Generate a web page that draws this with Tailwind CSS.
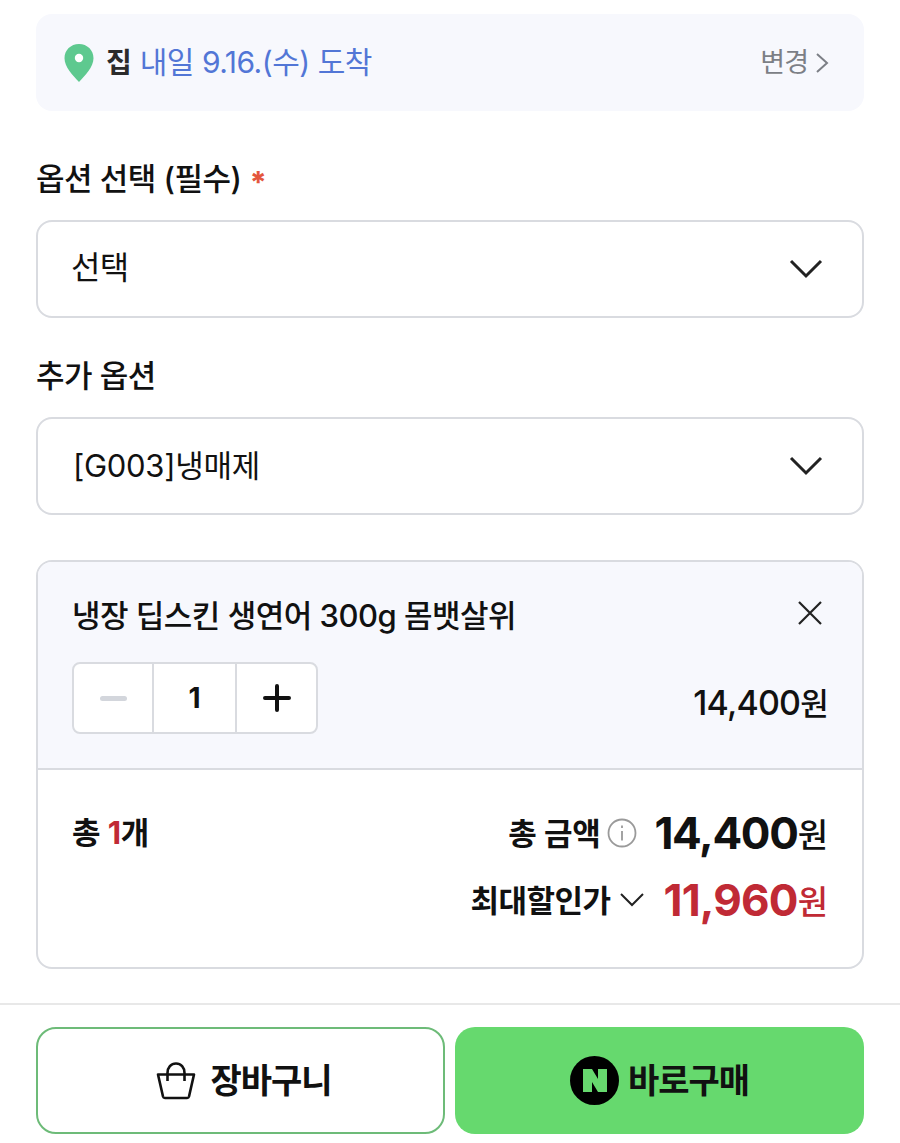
<!DOCTYPE html>
<html lang="ko">
<head>
  <meta charset="UTF-8" />
  <meta name="viewport" content="width=device-width, initial-scale=1.0" />
  <title>옵션 선택</title>
  <script src="https://cdn.jsdelivr.net/npm/@tailwindcss/browser@4"></script>
</head>
<body class="bg-white text-[#111] font-['Inter','Noto_Sans_CJK_KR',sans-serif] w-[900px] h-[1143px] overflow-hidden">

  <div class="px-9 pt-[14px]">
    <!-- delivery -->
    <div class="h-[97px] rounded-2xl bg-[#f7f8fd] flex items-center justify-between pl-[28px] pr-[35px]">
      <div class="flex items-center">
        <svg class="w-[30px] h-[38px]" viewBox="0 0 30 38">
          <path fill="#5ec98f" d="M15 0C6.700 0 0.500 6.200 0.500 14.200 0.500 23 9 31.500 15 38 21 31.500 29.500 23 29.500 14.200 29.500 6.200 23.300 0 15 0Z" />
          <circle cx="15" cy="14" r="4.200" fill="#fff" />
        </svg>
        <span class="ml-[12px] text-[28px] leading-none font-bold text-[#2b2b2b]">집</span>
        <span class="ml-[8px] text-[30px] leading-none -mt-[1px] text-[#5276d6] tracking-[-0.5px]">내일 9.16.(수) 도착</span>
      </div>
      <div class="flex items-center text-[#7c7f86]">
        <span class="text-[27px] leading-none tracking-[-1px]">변경</span>
        <svg class="w-[14px] h-[22px] ml-[7px]" viewBox="0 0 14 22" fill="none" stroke="#7c7f86" stroke-width="2"><path d="M2 2l10 9-10 9" /></svg>
      </div>
    </div>

    <!-- option -->
    <div class="mt-[47px] h-[40px] flex items-center text-[31px] leading-none font-medium tracking-[-0.5px]">
      옵션 선택 (필수)
      <span class="ml-[8px] mt-[8px] text-[#e4573d] font-extrabold text-[30px] leading-none">*</span>
    </div>
    <div class="mt-[22px] h-[98px] rounded-2xl border-2 border-[#d9dbe0] flex items-center justify-between pl-[33px] pr-[39px]">
      <span class="text-[32px] leading-none -mt-[2px] tracking-[-0.6px]">선택</span>
      <svg class="w-[34px] h-[20px]" viewBox="0 0 34 20" fill="none" stroke="#222" stroke-width="3"><path d="M2 2l15 15L32 2" /></svg>
    </div>

    <div class="mt-[37px] h-[40px] flex items-center text-[31px] leading-none font-medium tracking-[-0.5px]">추가 옵션</div>
    <div class="mt-[22px] h-[98px] rounded-2xl border-2 border-[#d9dbe0] flex items-center justify-between pl-[35px] pr-[39px]">
      <span class="text-[31px] leading-none -mt-[2px] tracking-[-0.3px]">[G003]냉매제</span>
      <svg class="w-[34px] h-[20px]" viewBox="0 0 34 20" fill="none" stroke="#222" stroke-width="3"><path d="M2 2l15 15L32 2" /></svg>
    </div>

    <!-- selected item -->
    <div class="mt-[45px] h-[409px] rounded-2xl border-2 border-[#d9dbe0] overflow-hidden">
      <div class="h-[208px] bg-[#f7f8fd] border-b-2 border-[#d9dbe0] pl-[34px] pr-[39px] pt-[38px]">
        <div class="flex items-start justify-between">
          <span class="text-[31px] leading-[32px] font-medium tracking-[-0.5px]">냉장 딥스킨 생연어 300g 몸뱃살위</span>
          <svg class="w-[26px] h-[26px]" viewBox="0 0 26 26" fill="none" stroke="#222" stroke-width="2.200"><path d="M2 2l22 22M24 2L2 24" /></svg>
        </div>
        <div class="mt-[30px] flex items-center justify-between -mr-[5px]">
          <div class="w-[246px] h-[72px] rounded-lg border-2 border-[#d9dbe0] bg-white flex">
            <div class="w-[80px] border-r-2 border-[#d9dbe0] flex items-center justify-center">
              <div class="w-[27px] h-[5px] rounded-full bg-[#d3d6dc]"></div>
            </div>
            <div class="w-[83px] border-r-2 border-[#d9dbe0] flex items-center justify-center text-[28px] leading-none font-bold">1</div>
            <div class="flex-1 flex items-center justify-center">
              <svg class="w-[28px] h-[28px]" viewBox="0 0 28 28" fill="none" stroke="#111" stroke-width="4" stroke-linecap="round"><path d="M14 2v24M2 14h24" /></svg>
            </div>
          </div>
          <span class="text-[34px] leading-none font-medium tracking-[-0.8px] mt-[10px]">14,400<span class="text-[31px]">원</span></span>
        </div>
      </div>
      <div class="pl-[34px] pr-[34px] pt-[38px] flex justify-between">
        <div class="text-[31px] leading-[50px] font-semibold tracking-[-0.3px] h-[50px]">총 <span class="text-[#c02a35] font-bold">1</span>개</div>
        <div class="flex flex-col items-end">
          <div class="flex items-center h-[50px]">
            <span class="text-[31px] leading-none font-semibold tracking-[-0.3px]">총 금액</span>
            <svg class="w-[30px] h-[30px] ml-[7px]" viewBox="0 0 30 30" fill="none" stroke="#9a9a9a" stroke-width="1.800"><circle cx="15" cy="15" r="13.500" /><path d="M15 13v9.500M15 7.500v2.500" /></svg>
            <span class="ml-[17px] text-[44px] leading-none font-bold tracking-[-1.300px]">14,400</span><span class="text-[33px] leading-none font-medium mt-[4px]">원</span>
          </div>
          <div class="mt-[17px] flex items-center h-[50px]">
            <span class="text-[31px] leading-none font-semibold tracking-[-0.5px]">최대할인가</span>
            <svg class="w-[24px] h-[14px] ml-[9px]" viewBox="0 0 24 14" fill="none" stroke="#222" stroke-width="2"><path d="M1 1l11 11L23 1" /></svg>
            <span class="ml-[20px] text-[44px] leading-none font-bold text-[#c02a35] tracking-[-0.8px]">11,960</span><span class="text-[33px] leading-none font-medium text-[#c02a35] mt-[4px]">원</span>
          </div>
        </div>
      </div>
    </div>
  </div>

  <!-- bottom bar -->
  <div class="mt-[34px] border-t-2 border-[#e8e8e8] px-9 pt-[22px] flex gap-[10px]">
    <button class="w-[409px] h-[107px] rounded-[20px] border-2 border-[#6dbb78] bg-white flex items-center justify-center pl-[7px]">
      <svg class="w-[40px] h-[38px] mr-[14px]" viewBox="0 0 40 38" fill="none" stroke="#111" stroke-width="2.600" stroke-linejoin="round">
        <path d="M2 12.500h36L33 34.500a2 2 0 0 1-2 1.500H9a2 2 0 0 1-2-1.500Z" />
        <path d="M11.500 19V11C11.500 5.500 15 1.500 20 1.500S28.500 5.500 28.500 11V19" />
      </svg>
      <span class="text-[34px] leading-none font-bold tracking-[-1px]">장바구니</span>
    </button>
    <button class="w-[409px] h-[107px] rounded-[20px] bg-[#66d96e] flex items-center justify-center">
      <svg class="w-[49px] h-[49px] mr-[9px]" viewBox="0 0 49 49">
        <circle cx="24.500" cy="24.500" r="24.500" fill="#000" />
        <path fill="#66d96e" d="M13 13h9l6 10V13h9v23h-9l-6-10v10h-9Z" />
      </svg>
      <span class="text-[34px] leading-none font-bold tracking-[-1px]">바로구매</span>
    </button>
  </div>

</body>
</html>
